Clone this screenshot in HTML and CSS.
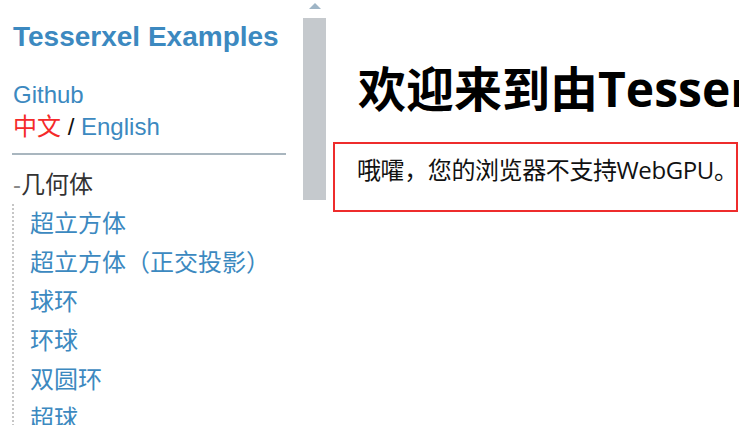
FILE: index.html
```html
<!DOCTYPE html>
<html lang="zh-CN">
<head>
<meta charset="utf-8">
<title>Tesserxel Examples</title>
<link rel="stylesheet" href="styles.css">
</head>
<body>
<div class="page">
  <aside class="sidebar">
    <div class="side-scroll">
      <h1 class="brand">Tesserxel Examples</h1>
      <a class="link github" href="#">Github</a>
      <div class="lang"><span class="cur">中文</span> / <a class="link" href="#">English</a></div>
      <hr class="sep">
      <div class="group"><span class="dash">-</span>几何体</div>
      <ul class="tree">
        <li><a class="link" href="#">超立方体</a></li>
        <li><a class="link" href="#">超立方体（正交投影）</a></li>
        <li><a class="link" href="#">球环</a></li>
        <li><a class="link" href="#">环球</a></li>
        <li><a class="link" href="#">双圆环</a></li>
        <li><a class="link" href="#">超球</a></li>
      </ul>
    </div>
    <div class="scrollbar">
      <div class="arrow"></div>
      <div class="thumb"></div>
    </div>
  </aside>
  <main class="main">
    <h1 class="welcome">欢迎来到由Tesserxel驱动的四维世界！</h1>
    <div class="notice">哦嚯，您的浏览器不支持WebGPU。</div>
  </main>
</div>
</body>
</html>
```

FILE: styles.css
```css
html, body {
  margin: 0;
  padding: 0;
  background: #fff;
}
body {
  font-family: "Liberation Sans", "Noto Sans CJK SC", sans-serif;
  font-size: 24px;
  color: #111;
}
.page {
  display: flex;
  height: 425px;
  overflow: hidden;
}
.sidebar {
  flex: 0 0 326px;
  display: flex;
  height: 100%;
  overflow: hidden;
}
.side-scroll {
  flex: 1;
  padding: 0 17px 0 12px;
  overflow: hidden;
}
.brand {
  margin: 21px 0 0 1px;
  font-size: 28px;
  line-height: 32px;
  font-weight: bold;
  color: #3c89c0;
  white-space: nowrap;
}
.link {
  color: #3c89c0;
  text-decoration: none;
}
.github {
  display: block;
  margin: 26px 0 0 1px;
  line-height: 32px;
}
.lang {
  margin-left: 1px;
  line-height: 32px;
  color: #111;
}
.cur {
  color: #f52a2a;
}
.sep {
  margin: 10px 0 0;
  border: 0;
  height: 2px;
  background: #a9b6bf;
}
.group {
  margin-top: 10px;
  margin-left: 1px;
  line-height: 39px;
  color: #333;
}
.dash {
  color: #888;
  font-family: "Liberation Sans", sans-serif;
  font-weight: 300;
}
.tree {
  list-style: none;
  margin: 0;
  padding: 0 0 0 16px;
  border-left: 2px dotted #c6c6c6;
}
.tree li {
  line-height: 39px;
  white-space: nowrap;
}
.scrollbar {
  flex: 0 0 23px;
  display: flex;
  flex-direction: column;
  align-items: center;
}
.arrow {
  margin-top: 3px;
  width: 0;
  height: 0;
  border-left: 6px solid transparent;
  border-right: 6px solid transparent;
  border-bottom: 6px solid #9fb5c6;
}
.thumb {
  margin-top: 9px;
  width: 23px;
  height: 182px;
  background: #c5c9cd;
}
.main {
  flex: 1;
  min-width: 0;
  padding: 0 1px 0 7px;
  overflow: hidden;
  font-family: "Open Sans", "Noto Sans CJK SC", sans-serif;
}
.welcome {
  margin: 59px 0 0 25px;
  font-size: 48px;
  line-height: 60px;
  font-weight: bold;
  color: #000;
  white-space: nowrap;
}
.notice {
  margin-top: 23px;
  border: 2px solid #ee2c2c;
  padding: 9px 0 23px 22px;
  line-height: 34px;
  letter-spacing: -0.4px;
  color: #111;
  white-space: nowrap;
  overflow: hidden;
}
```
